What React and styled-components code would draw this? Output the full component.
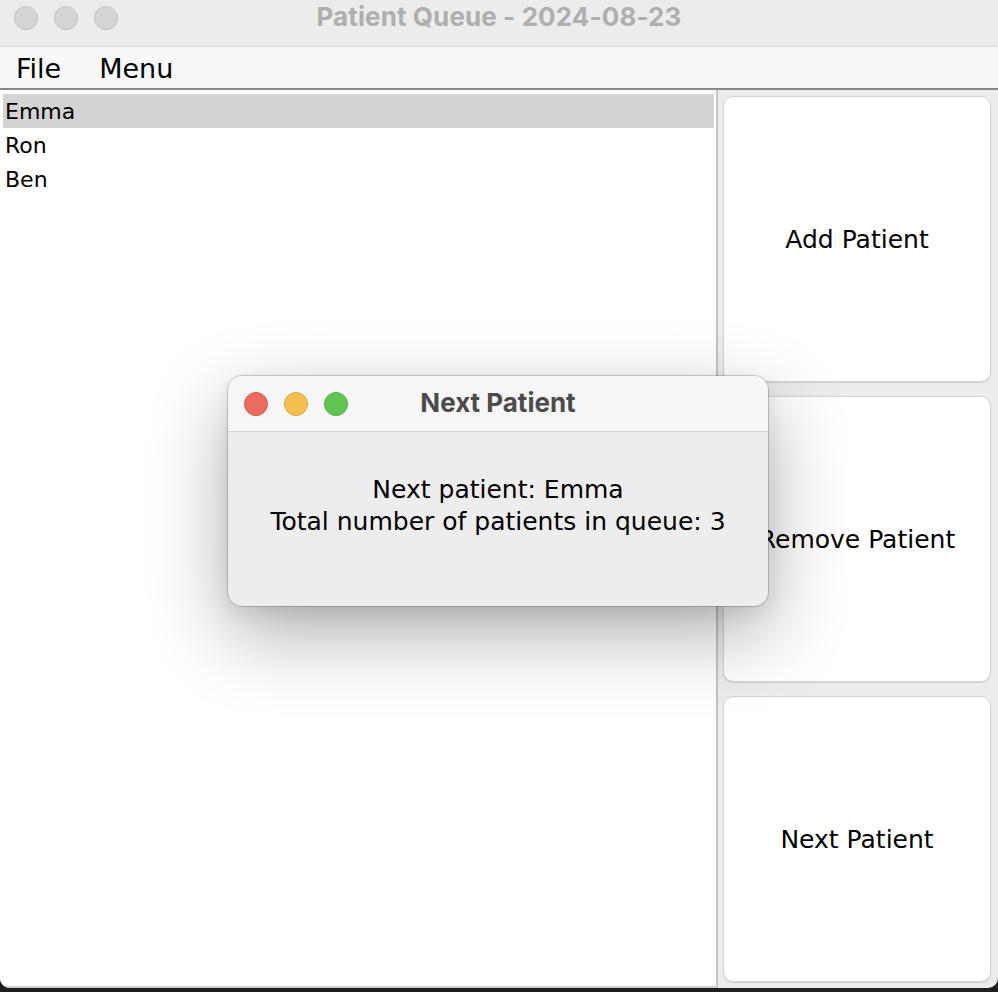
import React from "react";
import styled, { createGlobalStyle } from "styled-components";

const GlobalStyle = createGlobalStyle`
  html, body {
    margin: 0;
    padding: 0;
    background: #1f1f1f;
    overflow: hidden;
  }
  * {
    box-sizing: border-box;
  }
`;

const uiFont = `"DejaVu Sans", "Noto Sans", sans-serif`;
const titleFont = `Inter, "Liberation Sans", sans-serif`;

const Window = styled.div`
  position: relative;
  width: 998px;
  height: 988px;
  background: #ececec;
  border-radius: 0 0 10px 10px;
  overflow: hidden;
  display: flex;
  flex-direction: column;
`;

const TitleBar = styled.div`
  height: 47px;
  flex-shrink: 0;
  display: flex;
  align-items: center;
  position: relative;
  background: #ececec;
  border-bottom: 1px solid #d6d6d6;
  padding-left: 14px;
  padding-bottom: 11px;
`;

const Lights = styled.div`
  display: flex;
  gap: 16px;
`;

const Light = styled.span`
  width: 24px;
  height: 24px;
  border-radius: 50%;
  background: ${(p) => p.$color};
  border: 1px solid ${(p) => p.$edge};
`;

const WindowTitle = styled.div`
  position: absolute;
  left: 0;
  right: 0;
  top: 1px;
  text-align: center;
  font-family: ${titleFont};
  font-weight: 700;
  font-size: 26px;
  line-height: 32px;
  letter-spacing: 0.1px;
  color: #afafaf;
  pointer-events: none;
`;

const MenuBar = styled.div`
  height: 43px;
  flex-shrink: 0;
  display: flex;
  align-items: center;
  gap: 38px;
  padding: 2px 0 0 16px;
  background: #f8f8f8;
  border-bottom: 2px solid #878787;
  font-family: ${uiFont};
  font-size: 27px;
  color: #000;
`;

const Body = styled.div`
  flex: 1;
  display: flex;
  min-height: 0;
`;

const ListPanel = styled.div`
  width: 718px;
  flex-shrink: 0;
  background: #fff;
  border-right: 2px solid #c4c4c4;
  border-bottom: 2px solid #d0d0d0;
  padding: 4px 2px 0 3px;
`;

const Row = styled.div`
  height: 34px;
  display: flex;
  align-items: center;
  padding-left: 2px;
  font-family: ${uiFont};
  font-size: 22px;
  color: #000;
  background: ${(p) => (p.$selected ? "#d3d3d3" : "transparent")};
`;

const ButtonColumn = styled.div`
  flex: 1;
  display: flex;
  flex-direction: column;
  gap: 14px;
  padding: 6px 7px 6px 5px;
`;

const BigButton = styled.button`
  flex: 1;
  display: flex;
  align-items: center;
  justify-content: center;
  background: #fff;
  border: 1px solid #d4d4d4;
  border-radius: 10px;
  box-shadow: 0 1px 1px rgba(0, 0, 0, 0.12);
  font-family: ${uiFont};
  font-size: 25px;
  color: #000;
  padding: 0;
`;

const Dialog = styled.div`
  position: absolute;
  left: 228px;
  top: 376px;
  width: 540px;
  height: 230px;
  border-radius: 14px;
  background: #ededed;
  overflow: hidden;
  box-shadow: 0 0 0 1px rgba(0, 0, 0, 0.18), 0 28px 80px rgba(0, 0, 0, 0.32),
    0 8px 20px rgba(0, 0, 0, 0.08);
  display: flex;
  flex-direction: column;
`;

const DialogBar = styled.div`
  height: 56px;
  flex-shrink: 0;
  position: relative;
  display: flex;
  align-items: center;
  padding-left: 16px;
  background: #f6f6f6;
  border-bottom: 1px solid #d2d2d2;
`;

const DialogTitle = styled.div`
  position: absolute;
  left: 0;
  right: 0;
  top: 11px;
  text-align: center;
  font-family: ${titleFont};
  font-weight: 700;
  font-size: 26px;
  line-height: 32px;
  color: #4b4b4b;
`;

const DialogBody = styled.div`
  flex: 1;
  display: flex;
  flex-direction: column;
  align-items: center;
  padding-top: 42px;
  font-family: ${uiFont};
  font-size: 25px;
  line-height: 32px;
  color: #000;
`;

const patients = ["Emma", "Ron", "Ben"];

const App = () => {
  return (
    <>
      <GlobalStyle />
      <Window>
        <TitleBar>
          <Lights>
            <Light $color="#d5d5d5" $edge="#c2c2c2" />
            <Light $color="#d5d5d5" $edge="#c2c2c2" />
            <Light $color="#d5d5d5" $edge="#c2c2c2" />
          </Lights>
          <WindowTitle>Patient Queue - 2024-08-23</WindowTitle>
        </TitleBar>
        <MenuBar>
          <span>File</span>
          <span>Menu</span>
        </MenuBar>
        <Body>
          <ListPanel>
            {patients.map((name, i) => (
              <Row key={name} $selected={i === 0}>
                {name}
              </Row>
            ))}
          </ListPanel>
          <ButtonColumn>
            <BigButton>Add Patient</BigButton>
            <BigButton>Remove Patient</BigButton>
            <BigButton>Next Patient</BigButton>
          </ButtonColumn>
        </Body>
        <Dialog>
          <DialogBar>
            <Lights>
              <Light $color="#ed6a5e" $edge="#d25a4f" />
              <Light $color="#f5bf4f" $edge="#d9a53f" />
              <Light $color="#61c554" $edge="#4fae45" />
            </Lights>
            <DialogTitle>Next Patient</DialogTitle>
          </DialogBar>
          <DialogBody>
            <div>Next patient: Emma</div>
            <div>Total number of patients in queue: 3</div>
          </DialogBody>
        </Dialog>
      </Window>
    </>
  );
};

export default App;
